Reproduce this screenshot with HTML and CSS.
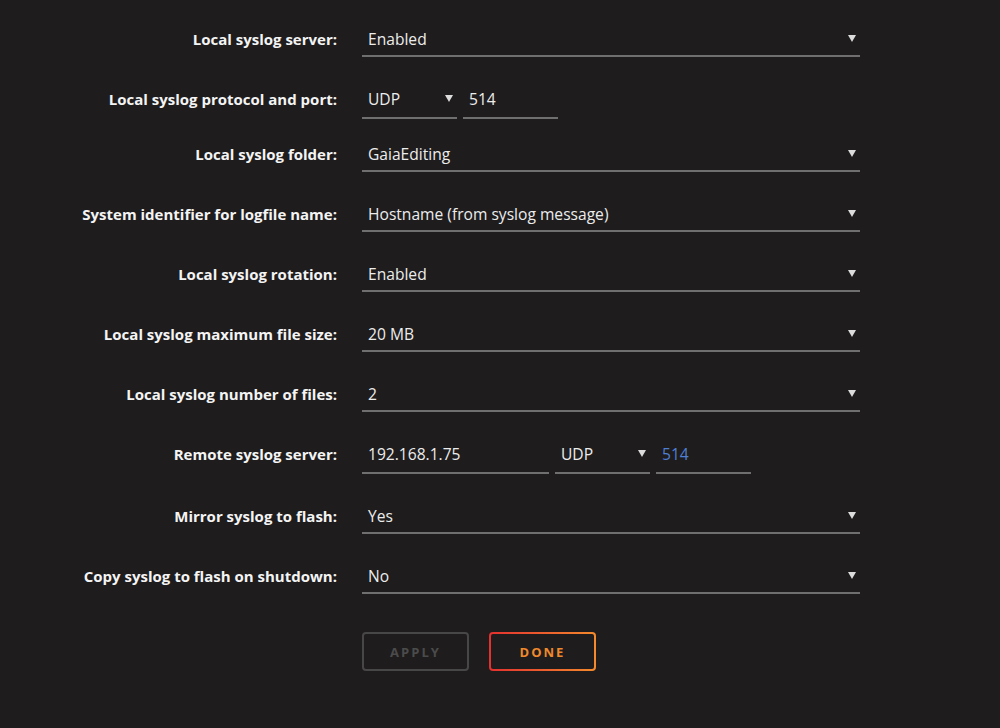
FILE: index.html
```html
<!DOCTYPE html>
<html>
<head>
<meta charset="utf-8">
<link rel="stylesheet" href="styles.css">
</head>
<body>
<div class="form">
  <div class="row">
    <div class="label">Local syslog server:</div>
    <div class="field"><div class="select full"><span>Enabled</span><svg class="arrow" width="8" height="7" viewBox="0 0 8 7"><polygon points="0,0 8,0 4,7"/></svg></div></div>
  </div>
  <div class="row tight">
    <div class="label">Local syslog protocol and port:</div>
    <div class="field"><div class="select small input-h"><span>UDP</span><svg class="arrow" width="8" height="7" viewBox="0 0 8 7"><polygon points="0,0 8,0 4,7"/></svg></div><div class="input small"><span>514</span></div></div>
  </div>
  <div class="row">
    <div class="label">Local syslog folder:</div>
    <div class="field"><div class="select full"><span>GaiaEditing</span><svg class="arrow" width="8" height="7" viewBox="0 0 8 7"><polygon points="0,0 8,0 4,7"/></svg></div></div>
  </div>
  <div class="row">
    <div class="label">System identifier for logfile name:</div>
    <div class="field"><div class="select full"><span>Hostname (from syslog message)</span><svg class="arrow" width="8" height="7" viewBox="0 0 8 7"><polygon points="0,0 8,0 4,7"/></svg></div></div>
  </div>
  <div class="row">
    <div class="label">Local syslog rotation:</div>
    <div class="field"><div class="select full"><span>Enabled</span><svg class="arrow" width="8" height="7" viewBox="0 0 8 7"><polygon points="0,0 8,0 4,7"/></svg></div></div>
  </div>
  <div class="row">
    <div class="label">Local syslog maximum file size:</div>
    <div class="field"><div class="select full"><span>20 MB</span><svg class="arrow" width="8" height="7" viewBox="0 0 8 7"><polygon points="0,0 8,0 4,7"/></svg></div></div>
  </div>
  <div class="row">
    <div class="label">Local syslog number of files:</div>
    <div class="field"><div class="select full"><span>2</span><svg class="arrow" width="8" height="7" viewBox="0 0 8 7"><polygon points="0,0 8,0 4,7"/></svg></div></div>
  </div>
  <div class="row">
    <div class="label">Remote syslog server:</div>
    <div class="field"><div class="input wide"><span>192.168.1.75</span></div><div class="select small input-h"><span>UDP</span><svg class="arrow" width="8" height="7" viewBox="0 0 8 7"><polygon points="0,0 8,0 4,7"/></svg></div><div class="input small"><span class="blue">514</span></div></div>
  </div>
  <div class="row">
    <div class="label">Mirror syslog to flash:</div>
    <div class="field"><div class="select full"><span>Yes</span><svg class="arrow" width="8" height="7" viewBox="0 0 8 7"><polygon points="0,0 8,0 4,7"/></svg></div></div>
  </div>
  <div class="row">
    <div class="label">Copy syslog to flash on shutdown:</div>
    <div class="field"><div class="select full"><span>No</span><svg class="arrow" width="8" height="7" viewBox="0 0 8 7"><polygon points="0,0 8,0 4,7"/></svg></div></div>
  </div>
  <div class="actions">
    <button class="btn apply">APPLY</button>
    <button class="btn done"><span>DONE</span></button>
  </div>
</div>
</body>
</html>
```
FILE: styles.css
```css
html, body {
  margin: 0;
  padding: 0;
  background: #1e1c1d;
  height: 100%;
}
body {
  font-family: "Open Sans", "Noto Sans", sans-serif;
  font-size: 15px;
  color: #ececec;
}
.form {
  display: flex;
  flex-direction: column;
  row-gap: 31px;
  padding-top: 28px;
}
.row {
  display: grid;
  grid-template-columns: 337px 498px;
  column-gap: 25px;
  align-items: start;
}
.row.tight {
  margin-bottom: -7px;
}
.label {
  text-align: right;
  font-weight: 700;
  line-height: 20px;
  padding-top: 1px;
  color: #f4f4f4;
  white-space: nowrap;
}
.field {
  display: flex;
  column-gap: 6px;
}
.select, .input {
  box-sizing: border-box;
  display: flex;
  align-items: flex-start;
  justify-content: space-between;
  font-size: 15.6px;
  line-height: 20px;
  padding: 1px 4px 6px 6px;
  border-bottom: 2px solid #6f6f6f;
  color: #ececec;
}
.input-h, .input {
  padding-bottom: 8px;
}
.full { width: 498px; }
.small { width: 95px; }
.input.small { width: 95px; }
.wide { width: 187px; }
.arrow {
  fill: #dcdcdc;
  margin-top: 6px;
}
.blue { color: #4f7fd3; }
.actions {
  display: flex;
  column-gap: 20px;
  padding-left: 362px;
  margin-top: 7px;
}
.btn {
  box-sizing: border-box;
  width: 107px;
  height: 39px;
  border-radius: 4px;
  font-family: "Open Sans", "Noto Sans", sans-serif;
  font-weight: 700;
  font-size: 13px;
  letter-spacing: 2px;
  background: #1e1c1d;
  cursor: pointer;
}
.apply {
  border: 2px solid #474747;
  color: #4b4b4b;
}
.done {
  border: 2px solid transparent;
  background: linear-gradient(#1e1c1d, #1e1c1d) padding-box, linear-gradient(90deg, #e4302f, #f48a2c) border-box;
  color: #f0882c;
}
```
